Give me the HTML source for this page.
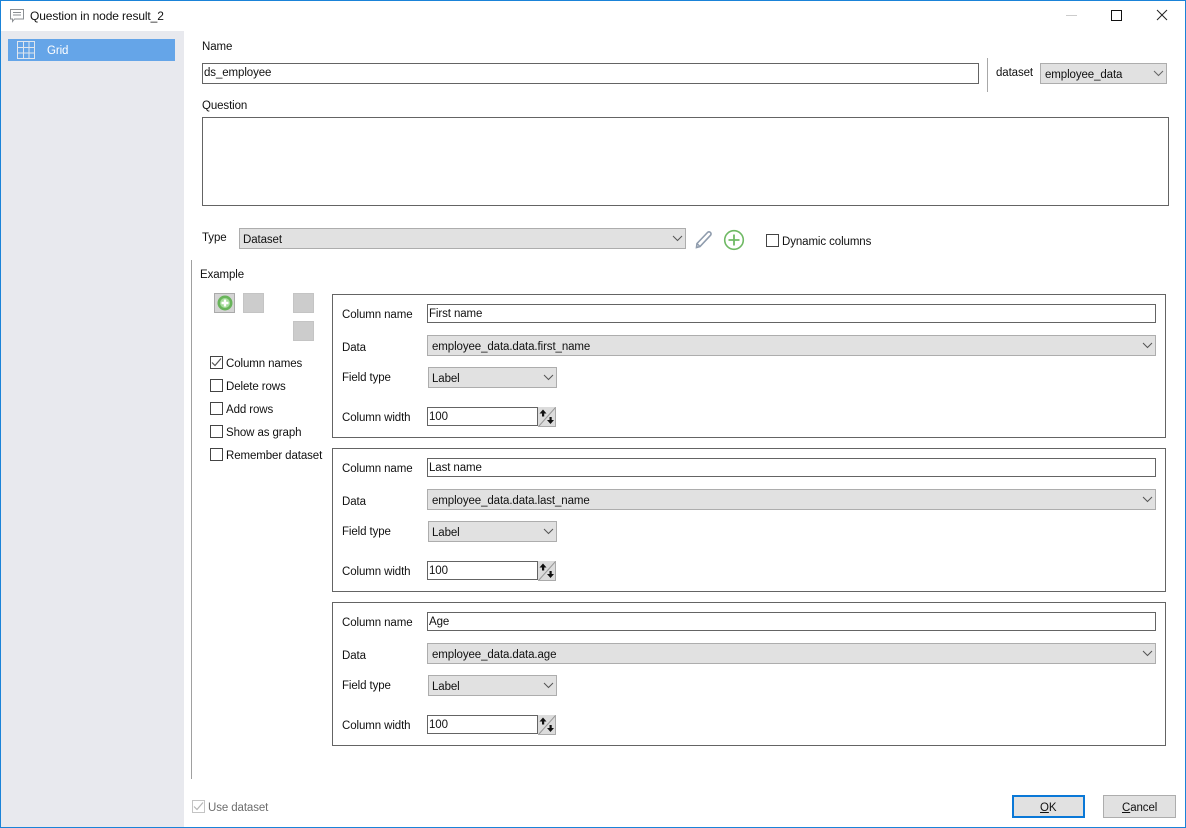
<!DOCTYPE html>
<html><head><meta charset="utf-8"><style>
html,body{margin:0;padding:0;background:#fff}
#w{position:relative;width:1186px;height:828px;overflow:hidden;background:#fff;font:11.5px/14px "Liberation Sans",sans-serif;letter-spacing:-.1px;color:#111}
#w div,#w svg,#w span.t{position:absolute;box-sizing:border-box}
.t{white-space:nowrap;margin-top:1px}
.in{background:#fff;border:1px solid #646464}
.sel{background:#e1e1e1;border:1px solid #adadad}
.box{border:1px solid #646464;background:#fff}
.cb{width:13px;height:13px;border:1px solid #444;background:#fff}
.sq{background:#ccc;border:1px solid #c4c4c4}
</style></head><body><div id="w">
<div style="left:1px;top:31px;width:183px;height:796px;background:#e8e9ee"></div>
<div style="left:0;top:0;width:1186px;height:828px;border:1px solid #1a83d8"></div>
<svg style="left:10px;top:9px" width="15" height="15" viewBox="0 0 15 15" fill="none"><path d="M.5.5h13v9.5H4.500L2.500 12.500V10H.5z" stroke="#8b8f93"/><path d="M3 3.500h8M3 6h8" stroke="#8b8f93"/></svg>
<span class="t" style="left:30px;top:9px;margin-top:0;font-size:12px;letter-spacing:-.12px">Question in node result_2</span>
<div style="left:1066px;top:15px;width:11px;height:1px;background:#ccc"></div>
<div style="left:1111px;top:10px;width:11px;height:11px;border:1px solid #111"></div>
<svg style="left:1156px;top:9px" width="12" height="12" viewBox="0 0 12 12"><path d="M1 1l10 10M11 1L1 11" stroke="#222" stroke-width="1"/></svg>

<div style="left:8px;top:39px;width:167px;height:22px;background:#65a5e8"></div>
<svg style="left:17px;top:41px" width="18" height="18" viewBox="0 0 18 18" fill="none" stroke="#dfe6ee"><path d="M.5.500h17v17H.5zM.5 6.500h17M.5 12h17M6.500.500v17M12 .500v17"/></svg>
<span class="t" style="left:47px;top:43px;color:#fff">Grid</span>

<span class="t" style="left:202px;top:39px">Name</span>
<div class="in" style="left:202px;top:63px;width:777px;height:21px"></div>
<span class="t" style="left:204px;top:65px">ds_employee</span>
<div style="left:987px;top:58px;width:1px;height:34px;background:#a8a8a8"></div>
<span class="t" style="left:996px;top:65px">dataset</span>
<div class="sel" style="left:1040px;top:63px;width:127px;height:21px"></div>
<span class="t" style="left:1045px;top:67px">employee_data</span>
<svg style="left:1153px;top:70px" width="11" height="7" fill="none"><path d="M1 1l4.500 4.500L10 1" stroke="#666" /></svg>

<span class="t" style="left:202px;top:98px">Question</span>
<div class="in" style="left:202px;top:117px;width:967px;height:89px"></div>

<span class="t" style="left:202px;top:230px">Type</span>
<div class="sel" style="left:239px;top:228px;width:447px;height:21px"></div>
<span class="t" style="left:243px;top:232px">Dataset</span>
<svg style="left:672px;top:235px" width="11" height="7" fill="none"><path d="M1 1l4.500 4.500L10 1" stroke="#555"/></svg>
<svg style="left:694px;top:229px" width="20" height="20" viewBox="0 0 20 20" fill="none"><path d="M3 14.500L13.500 3.500a2 2 0 0 1 3 2.800L6 17.500l-3.500 1z" stroke="#8f9cad" stroke-width="1.600"/><path d="M3 14.500l3 3" stroke="#8f9cad" stroke-width="1.300"/></svg>
<svg style="left:723px;top:229px" width="22" height="22" viewBox="0 0 22 22" fill="none"><circle cx="11" cy="11" r="9.300" stroke="#6fb964" stroke-width="1.600"/><path d="M11 5.500v11M5.500 11h11" stroke="#6fb964" stroke-width="1.800"/></svg>
<div class="cb" style="left:766px;top:234px"></div>
<span class="t" style="left:782px;top:234px">Dynamic columns</span>

<div style="left:191px;top:260px;width:1px;height:519px;background:#a0a0a0"></div>
<span class="t" style="left:200px;top:267px">Example</span>

<div style="left:214px;top:293px;width:21px;height:20px;background:#d4d4d4;border:1px solid #aaa"></div>
<svg style="left:217px;top:295px" width="16" height="16" viewBox="0 0 16 16"><circle cx="8" cy="8" r="7.500" fill="#68b45a"/><circle cx="8" cy="8" r="5" fill="#a5dc9a"/><path d="M8 4.500v7M4.500 8h7" stroke="#fff" stroke-width="2.400"/></svg>
<div class="sq" style="left:243px;top:293px;width:21px;height:20px"></div>
<div class="sq" style="left:293px;top:293px;width:21px;height:20px"></div>
<div class="sq" style="left:293px;top:321px;width:21px;height:20px"></div>

<div class="cb" style="left:210px;top:356px"></div>
<svg style="left:211px;top:357px" width="11" height="11" fill="none"><path d="M1 5.500l3 3 6-7" stroke="#555" stroke-width="1.200"/></svg>
<span class="t" style="left:226px;top:356px">Column names</span>
<div class="cb" style="left:210px;top:379px"></div><span class="t" style="left:226px;top:379px">Delete rows</span>
<div class="cb" style="left:210px;top:402px"></div><span class="t" style="left:226px;top:402px">Add rows</span>
<div class="cb" style="left:210px;top:425px"></div><span class="t" style="left:226px;top:425px">Show as graph</span>
<div class="cb" style="left:210px;top:448px"></div><span class="t" style="left:226px;top:448px">Remember dataset</span>

<!-- Panel 1 -->
<div class="box" style="left:332px;top:294px;width:834px;height:144px"></div>
<span class="t" style="left:342px;top:307px">Column name</span>
<div class="in" style="left:427px;top:304px;width:729px;height:19px"></div>
<span class="t" style="left:429px;top:306px">First name</span>
<span class="t" style="left:342px;top:340px">Data</span>
<div class="sel" style="left:427px;top:335px;width:729px;height:21px"></div>
<span class="t" style="left:432px;top:339px">employee_data.data.first_name</span>
<svg style="left:1142px;top:342px" width="11" height="7" fill="none"><path d="M1 1l4.500 4.500L10 1" stroke="#555"/></svg>
<span class="t" style="left:342px;top:370px">Field type</span>
<div class="sel" style="left:428px;top:367px;width:129px;height:21px"></div>
<span class="t" style="left:432px;top:371px">Label</span>
<svg style="left:543px;top:374px" width="11" height="7" fill="none"><path d="M1 1l4.500 4.500L10 1" stroke="#555"/></svg>
<span class="t" style="left:342px;top:410px">Column width</span>
<div class="in" style="left:427px;top:407px;width:111px;height:19px"></div>
<span class="t" style="left:429px;top:409px">100</span>
<svg style="left:538px;top:407px" width="18" height="20" viewBox="0 0 18 20"><rect width="18" height="20" fill="#dcdcdc"/><path d="M.5 19.500L17.500.5" stroke="#999"/><path d="M0 19.500h17.500V0" stroke="#aaa" fill="none"/><path d="M5 2.500L1.500 6.500H4v3h2.200v-3h2.300zM12.500 17l3.500-4h-2.300v-3h-2.200v3H9z" fill="#111"/></svg>

<!-- Panel 2 -->
<div class="box" style="left:332px;top:448px;width:834px;height:144px"></div>
<span class="t" style="left:342px;top:461px">Column name</span>
<div class="in" style="left:427px;top:458px;width:729px;height:19px"></div>
<span class="t" style="left:429px;top:460px">Last name</span>
<span class="t" style="left:342px;top:494px">Data</span>
<div class="sel" style="left:427px;top:489px;width:729px;height:21px"></div>
<span class="t" style="left:432px;top:493px">employee_data.data.last_name</span>
<svg style="left:1142px;top:496px" width="11" height="7" fill="none"><path d="M1 1l4.500 4.500L10 1" stroke="#555"/></svg>
<span class="t" style="left:342px;top:524px">Field type</span>
<div class="sel" style="left:428px;top:521px;width:129px;height:21px"></div>
<span class="t" style="left:432px;top:525px">Label</span>
<svg style="left:543px;top:528px" width="11" height="7" fill="none"><path d="M1 1l4.500 4.500L10 1" stroke="#555"/></svg>
<span class="t" style="left:342px;top:564px">Column width</span>
<div class="in" style="left:427px;top:561px;width:111px;height:19px"></div>
<span class="t" style="left:429px;top:563px">100</span>
<svg style="left:538px;top:561px" width="18" height="20" viewBox="0 0 18 20"><rect width="18" height="20" fill="#dcdcdc"/><path d="M.5 19.500L17.500.5" stroke="#999"/><path d="M0 19.500h17.500V0" stroke="#aaa" fill="none"/><path d="M5 2.500L1.500 6.500H4v3h2.200v-3h2.300zM12.500 17l3.500-4h-2.300v-3h-2.200v3H9z" fill="#111"/></svg>

<!-- Panel 3 -->
<div class="box" style="left:332px;top:602px;width:834px;height:144px"></div>
<span class="t" style="left:342px;top:615px">Column name</span>
<div class="in" style="left:427px;top:612px;width:729px;height:19px"></div>
<span class="t" style="left:429px;top:614px">Age</span>
<span class="t" style="left:342px;top:648px">Data</span>
<div class="sel" style="left:427px;top:643px;width:729px;height:21px"></div>
<span class="t" style="left:432px;top:647px">employee_data.data.age</span>
<svg style="left:1142px;top:650px" width="11" height="7" fill="none"><path d="M1 1l4.500 4.500L10 1" stroke="#555"/></svg>
<span class="t" style="left:342px;top:678px">Field type</span>
<div class="sel" style="left:428px;top:675px;width:129px;height:21px"></div>
<span class="t" style="left:432px;top:679px">Label</span>
<svg style="left:543px;top:682px" width="11" height="7" fill="none"><path d="M1 1l4.500 4.500L10 1" stroke="#555"/></svg>
<span class="t" style="left:342px;top:718px">Column width</span>
<div class="in" style="left:427px;top:715px;width:111px;height:19px"></div>
<span class="t" style="left:429px;top:717px">100</span>
<svg style="left:538px;top:715px" width="18" height="20" viewBox="0 0 18 20"><rect width="18" height="20" fill="#dcdcdc"/><path d="M.5 19.500L17.500.5" stroke="#999"/><path d="M0 19.500h17.500V0" stroke="#aaa" fill="none"/><path d="M5 2.500L1.500 6.500H4v3h2.200v-3h2.300zM12.500 17l3.500-4h-2.300v-3h-2.200v3H9z" fill="#111"/></svg>

<!-- Footer -->
<div class="cb" style="left:192px;top:800px;border-color:#c4c4c4"></div>
<svg style="left:193px;top:801px" width="11" height="11" fill="none"><path d="M1 5.500l3 3 6-7" stroke="#b5b5b5" stroke-width="1.200"/></svg>
<span class="t" style="left:208px;top:800px;color:#6d6d6d">Use dataset</span>
<div style="left:1012px;top:795px;width:73px;height:23px;background:#e1e1e1;border:2px solid #0a78d7"></div>
<span class="t" style="left:1040px;top:800px"><u>O</u>K</span>
<div style="left:1103px;top:795px;width:73px;height:23px;background:#e1e1e1;border:1px solid #adadad"></div>
<span class="t" style="left:1122px;top:800px"><u>C</u>ancel</span>
</div></body></html>
